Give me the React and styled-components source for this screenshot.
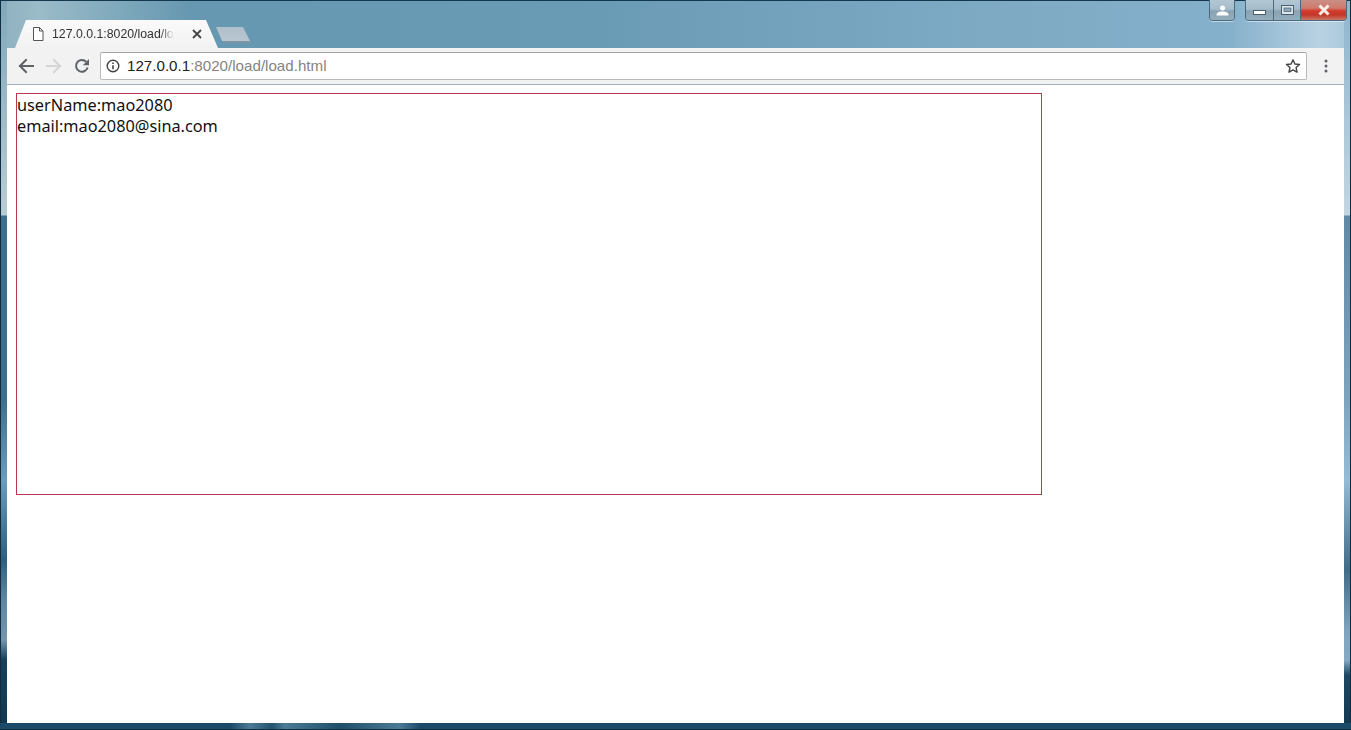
import React from "react";
import styled, { createGlobalStyle } from "styled-components";

const Global = createGlobalStyle`
  html, body { margin: 0; padding: 0; height: 100%; overflow: hidden; background: #fff; }
  #root { height: 100%; }
`;

const Win = styled.div`
  box-sizing: border-box;
  width: 1351px;
  height: 730px;
  display: flex;
  flex-direction: column;
  padding: 0 7px 7px;
  background:
    linear-gradient(#16384f, #16384f) 0 0 / 100% 1px no-repeat,
    linear-gradient(#0f2c40, #0f2c40) 0 100% / 100% 1px no-repeat,
    linear-gradient(90deg, #1a4a68 0, #1a4a68 230px, #4a7a96 250px, #24536f 272px, #4a7a96 285px, #1f4e6a 340px, #4a7a96 400px, #1a4a68 420px) 0 100% / 100% 7px no-repeat,
    linear-gradient(#0f2c40, #0f2c40) 0 0 / 1px 100% no-repeat,
    linear-gradient(#0f2c40, #0f2c40) 100% 0 / 1px 100% no-repeat,
    linear-gradient(180deg, #7fa8ba 0, #b9ccd4 215px, #3f6f8c 216px, #3f6f8c 400px, #6c9cbc 480px, #2f5f7e 560px, #5f87a3 600px, #7595ad 640px, #16405c 660px, #12384f 730px) 0 0 / 7px 100% no-repeat,
    linear-gradient(180deg, #8db4cd 0, #c3d6e2 215px, #5f8aa6 216px, #7ba4bf 400px, #93bcd6 480px, #3f6c88 570px, #7da4bf 630px, #86aac4 660px, #1b4864 675px, #12384f 730px) 100% 0 / 7px 100% no-repeat,
    linear-gradient(90deg, #8fb2c0 0, #9abbc8 40px, #6698b1 190px, #6a9bb5 600px, #7eaac4 1000px, #85b0cb 1230px, #b9d2e3 1320px, #a9c7da 1351px);
`;

const TitleBar = styled.div`
  height: 48px;
  flex: none;
  display: flex;
  justify-content: space-between;
  align-items: flex-start;
  margin-right: -3px;
`;

const TabStrip = styled.div`
  display: flex;
  align-items: flex-start;
  padding-top: 20px;
`;

const Tab = styled.div`
  box-sizing: border-box;
  width: 211px;
  height: 28px;
  display: flex;
  align-items: center;
  padding: 0 16px 0 25px;
  background: linear-gradient(#fafafa, #f2f2f2);
  clip-path: polygon(0 100%, 8px 100%, 19px 0, 199px 0, 211px 100%);
`;

const TabTitle = styled.span`
  flex: 1;
  min-width: 0;
  margin-left: 8px;
  font: 12.300px "Liberation Sans", Arial, sans-serif;
  color: #333;
  white-space: nowrap;
  overflow: hidden;
  -webkit-mask-image: linear-gradient(90deg, #000 108px, transparent 122px);
  mask-image: linear-gradient(90deg, #000 108px, transparent 122px);
`;

const NewTab = styled.div`
  width: 36px;
  height: 16px;
  margin: 7px 0 0 -2px;
  background: linear-gradient(#aebfcb, #b8c6d0 85%, #7d95a5 85%);
  clip-path: polygon(0 0, 27px 0, 35px 100%, 7px 100%);
`;

const Controls = styled.div`
  display: flex;
  align-items: flex-start;
  gap: 10px;
`;

const ControlGroup = styled.div`
  display: flex;
  height: 20px;
  border: 1px solid #4c6a7d;
  border-top: none;
  border-radius: 0 0 4px 4px;
  overflow: hidden;
  box-shadow: 0 1px 0 rgba(255, 255, 255, 0.5);
`;

const Control = styled.div`
  box-sizing: border-box;
  width: ${(p) => p.$w}px;
  display: flex;
  align-items: center;
  justify-content: center;
  background: ${(p) =>
    p.$close
      ? "linear-gradient(#c98f86 0, #cf7a6c 40%, #d23a2a 55%, #c4382a 75%, #c9786a 100%)"
      : "linear-gradient(#b3c7d3 0, #a6bcca 45%, #8aa3b3 55%, #95aebe 100%)"};
  & + & { border-left: 1px solid #4c6a7d; }
`;

const Toolbar = styled.div`
  flex: none;
  height: 37px;
  display: flex;
  align-items: center;
  padding: 0 5px 1px 5px;
  background: #f2f2f2;
  border-bottom: 1px solid #a3b0b8;
  box-sizing: border-box;
`;

const NavBtn = styled.div`
  width: 28px;
  height: 28px;
  display: flex;
  align-items: center;
  justify-content: center;
`;

const Omnibox = styled.div`
  flex: 1;
  height: 28px;
  margin: 0 17px 0 4px;
  box-sizing: border-box;
  background: #fff;
  border: 1px solid #b9b9b9;
  border-top-color: #a4a4a4;
  border-radius: 2px;
  display: flex;
  align-items: center;
  padding: 0 5px 0 5px;
`;

const Url = styled.div`
  flex: 1;
  margin-left: 7px;
  font: 15.150px "Liberation Sans", Arial, sans-serif;
  color: #848484;
`;

const UrlHost = styled.span`
  color: #222;
`;

const Page = styled.div`
  flex: 1;
  background: #fff;
  padding: 8px 9px;
  box-sizing: border-box;
`;

const Box = styled.div`
  box-sizing: border-box;
  width: 1026px;
  height: 402px;
  padding-top: 1px;
  border: 1px solid #b9384f;
  font: 16.300px/21px "Noto Sans", "Liberation Sans", Arial, sans-serif;
  color: #111;
`;

const Kebab = styled.svg`
  margin-right: 11px;
`;

const Stroke = { fill: "none", strokeLinecap: "square" };

export default function App() {
  return (
    <>
      <Global />
      <Win>
        <TitleBar>
          <TabStrip>
            <Tab>
              <svg width="12" height="14" viewBox="0 0 12 14">
                <path d="M1.500.5h6l3.500 3.500v9.500h-9.500z M7.500.5v3.500h3.500" fill="#fff" stroke="#555" strokeWidth="1" />
              </svg>
              <TabTitle>127.0.0.1:8020/load/load.html</TabTitle>
              <svg width="10" height="10" viewBox="0 0 10 10">
                <path d="M1 1l8 8M9 1l-8 8" stroke="#444" strokeWidth="1.800" fill="none" />
              </svg>
            </Tab>
            <NewTab />
          </TabStrip>
          <Controls>
            <ControlGroup>
              <Control $w={24}>
                <svg width="13" height="11" viewBox="0 0 13 11">
                  <circle cx="6.500" cy="3" r="2.500" fill="#fff" />
                  <path d="M.5 10.500c0-3 2-4 6-4s6 1 6 4z" fill="#fff" />
                </svg>
              </Control>
            </ControlGroup>
            <ControlGroup>
              <Control $w={27}>
                <svg width="13" height="6" viewBox="0 0 13 6" style={{ marginTop: 5 }}>
                  <rect x=".5" y=".5" width="12" height="4" fill="#fff" stroke="#4a5f6e" />
                </svg>
              </Control>
              <Control $w={27}>
                <svg width="13" height="10" viewBox="0 0 13 10">
                  <rect x=".5" y=".5" width="12" height="9" fill="#dbe6ec" stroke="#4a5f6e" />
                  <rect x="3" y="3" width="7" height="3.500" fill="#8ea8b8" stroke="#4a5f6e" strokeWidth=".7" />
                </svg>
              </Control>
              <Control $w={46} $close>
                <svg width="14" height="12" viewBox="0 0 14 12">
                  <path d="M2.500 1.500l9 9M11.500 1.500l-9 9" stroke="#f6ece8" strokeWidth="3" fill="none" />
                </svg>
              </Control>
            </ControlGroup>
          </Controls>
        </TitleBar>
        <Toolbar>
          <NavBtn>
            <svg width="16" height="16" viewBox="0 0 16 16" {...Stroke}>
              <path d="M15 8H2M8 2L2 8l6 6" stroke="#5f6368" strokeWidth="2" />
            </svg>
          </NavBtn>
          <NavBtn>
            <svg width="16" height="16" viewBox="0 0 16 16" {...Stroke}>
              <path d="M1 8h13M8 2l6 6-6 6" stroke="#d3d5d6" strokeWidth="2" />
            </svg>
          </NavBtn>
          <NavBtn>
            <svg width="16" height="16" viewBox="0 0 16 16" fill="none">
              <path d="M13.600 9.500A5.900 5.900 0 1 1 12.200 3.800" stroke="#5f6368" strokeWidth="2" />
              <path d="M15 1v6.200H8.800z" fill="#5f6368" />
            </svg>
          </NavBtn>
          <Omnibox>
            <svg width="14" height="14" viewBox="0 0 14 14" fill="none">
              <circle cx="7" cy="7" r="5.800" stroke="#444" strokeWidth="1.400" />
              <path d="M7 6.200v4M7 3.500v1.500" stroke="#444" strokeWidth="1.600" />
            </svg>
            <Url>
              <UrlHost>127.0.0.1</UrlHost>:8020/load/load.html
            </Url>
            <svg width="16" height="16" viewBox="0 0 16 16" fill="none">
              <path d="M8 1.800l1.900 4.200 4.600.5-3.400 3.100.9 4.600L8 11.900l-4 2.300.9-4.600L1.500 6.500l4.600-.5z" stroke="#444" strokeWidth="1.400" strokeLinejoin="round" />
            </svg>
          </Omnibox>
          <Kebab width="4" height="14" viewBox="0 0 4 14">
            <circle cx="2" cy="2" r="1.500" fill="#5f6368" />
            <circle cx="2" cy="7" r="1.500" fill="#5f6368" />
            <circle cx="2" cy="12" r="1.500" fill="#5f6368" />
          </Kebab>
        </Toolbar>
        <Page>
          <Box>
            userName:mao2080
            <br />
            email:mao2080@sina.com
          </Box>
        </Page>
      </Win>
    </>
  );
}
